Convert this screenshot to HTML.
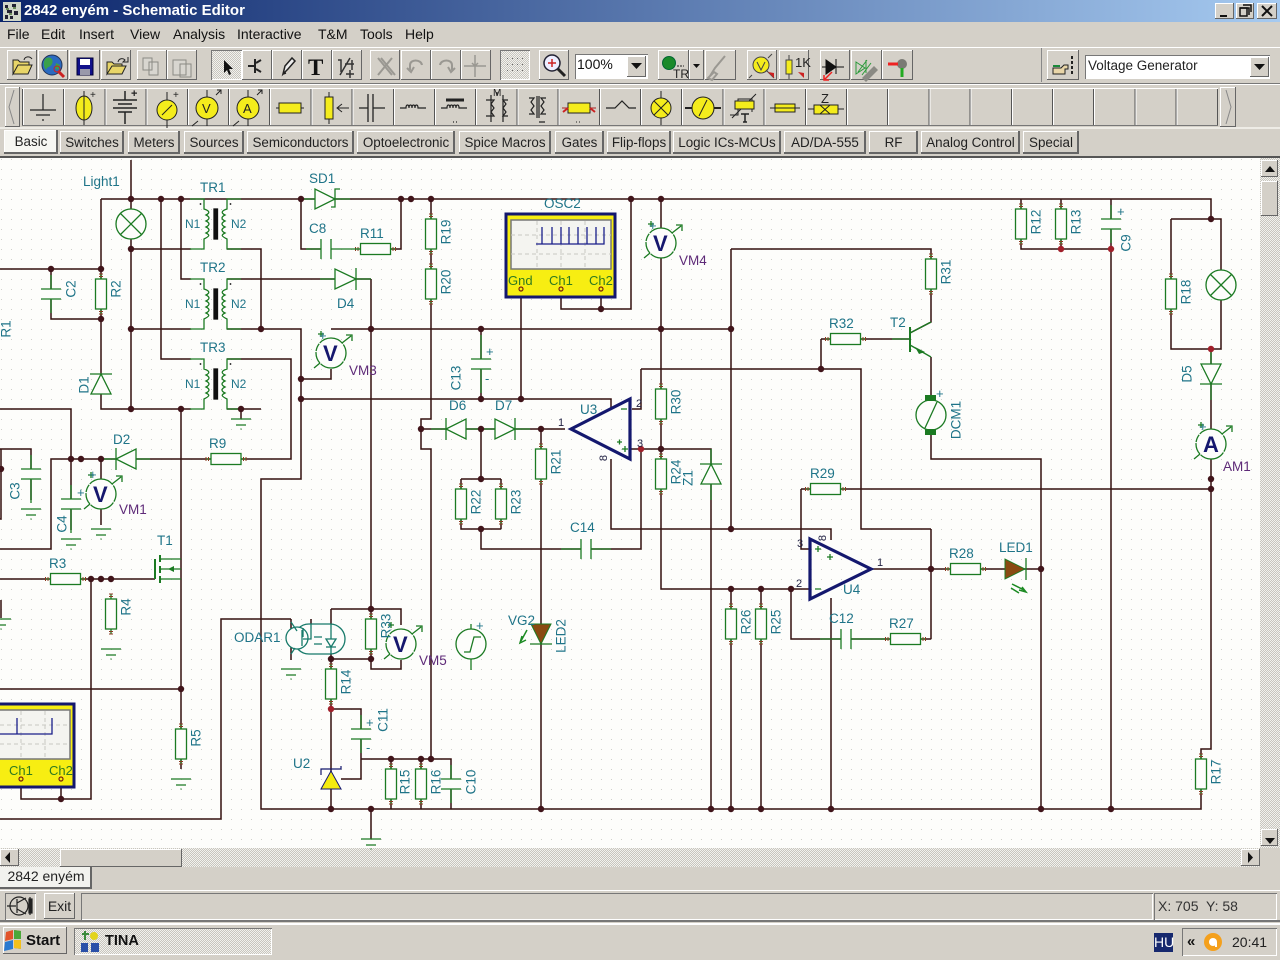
<!DOCTYPE html>
<html><head><meta charset="utf-8"><title>2842 enyém - Schematic Editor</title>
<style>
html,body{margin:0;padding:0;background:#d4d0c8;width:1280px;height:960px;overflow:hidden}
body{position:relative;font-family:"Liberation Sans",sans-serif;font-size:14px;color:#111}
.a{position:absolute;white-space:nowrap}
.b{position:absolute;background:#d4d0c8;box-shadow:inset -1px -1px #666,inset 1px 1px #fff;box-sizing:border-box}
.s{position:absolute;background:#d4d0c8;box-shadow:inset 1px 1px #777,inset -1px -1px #fff;box-sizing:border-box}
.t{position:absolute;top:131px;height:23px;line-height:24px;text-align:center;background:#d4d0c8;box-shadow:inset -2px -2px #666,inset 1px 1px #fff;font-size:13.4px;color:#222;white-space:nowrap}
.d{background:repeating-conic-gradient(#c8c5be 0 25%,#f2f2ee 0 50%) 0 0/2px 2px}
#title{left:0;top:0;width:1280px;height:22px;background:linear-gradient(90deg,#0a246a,#a6caf0)}
svg{position:absolute;left:0;top:0}
svg text{font-family:"Liberation Sans",sans-serif;font-size:13.5px;fill:#1f7488}
.p{fill:#5e2a78}
.k{fill:#224}
.v{text-anchor:middle;dominant-baseline:central}
.y{fill:#2f7a20;font-size:13px}
</style></head><body>
<div class="a" id="title"></div>
<div class="a" style="left:24px;top:2px;color:#fff;font-weight:bold;font-size:15px;line-height:18px">2842 enyém - Schematic Editor</div>
<div class="b" style="left:1215px;top:3px;width:19px;height:16px"></div>
<div class="b" style="left:1236px;top:3px;width:18px;height:16px"></div>
<div class="b" style="left:1257px;top:3px;width:20px;height:16px"></div>

<div class="a" style="left:7px;top:26px">File</div>
<div class="a" style="left:41px;top:26px">Edit</div>
<div class="a" style="left:79px;top:26px">Insert</div>
<div class="a" style="left:130px;top:26px">View</div>
<div class="a" style="left:173px;top:26px">Analysis</div>
<div class="a" style="left:237px;top:26px">Interactive</div>
<div class="a" style="left:318px;top:26px">T&amp;M</div>
<div class="a" style="left:360px;top:26px">Tools</div>
<div class="a" style="left:405px;top:26px">Help</div>

<div class="a" style="left:0;top:47px;width:1280px;height:1px;background:#fff"></div>
<div class="a" style="left:0;top:83px;width:1280px;height:1px;background:#777"></div>
<div class="a" style="left:0;top:84px;width:1280px;height:1px;background:#fff"></div>
<div class="a" style="left:0;top:127px;width:1280px;height:2px;background:#eeece6"></div>
<div class="a" style="left:0;top:156px;width:1280px;height:2px;background:#555"></div>

<!-- toolbar 1 -->
<div class="b" style="left:7px;top:50px;width:30px;height:30px"></div>
<div class="b" style="left:38px;top:50px;width:30px;height:30px"></div>
<div class="b" style="left:69px;top:50px;width:31px;height:30px"></div>
<div class="b" style="left:101px;top:50px;width:30px;height:30px"></div>
<div class="b" style="left:137px;top:50px;width:30px;height:30px"></div>
<div class="b" style="left:167px;top:50px;width:30px;height:30px"></div>
<div class="s d" style="left:211px;top:50px;width:31px;height:30px"></div>
<div class="b" style="left:242px;top:50px;width:30px;height:30px"></div>
<div class="b" style="left:272px;top:50px;width:30px;height:30px"></div>
<div class="b" style="left:302px;top:50px;width:30px;height:30px"></div>
<div class="b" style="left:332px;top:50px;width:30px;height:30px"></div>
<div class="b" style="left:370px;top:50px;width:30px;height:30px"></div>
<div class="b" style="left:401px;top:50px;width:30px;height:30px"></div>
<div class="b" style="left:431px;top:50px;width:30px;height:30px"></div>
<div class="b" style="left:461px;top:50px;width:30px;height:30px"></div>
<div class="s d" style="left:500px;top:50px;width:30px;height:30px"></div>
<div class="b" style="left:539px;top:50px;width:30px;height:30px"></div>
<div class="s" style="left:575px;top:54px;width:73px;height:25px;background:#fff"></div>
<div class="a" style="left:577px;top:56px;font-size:14px">100%</div>
<div class="b" style="left:627px;top:56px;width:19px;height:21px"></div>
<div class="b" style="left:658px;top:50px;width:31px;height:30px"></div>
<div class="b" style="left:689px;top:50px;width:15px;height:30px"></div>
<div class="b" style="left:705px;top:50px;width:31px;height:30px"></div>
<div class="b" style="left:747px;top:50px;width:30px;height:30px"></div>
<div class="b" style="left:779px;top:50px;width:30px;height:30px"></div>
<div class="b" style="left:820px;top:50px;width:30px;height:30px"></div>
<div class="b" style="left:851px;top:50px;width:31px;height:30px"></div>
<div class="b" style="left:882px;top:50px;width:31px;height:30px"></div>
<div class="a" style="left:1041px;top:48px;width:1px;height:34px;background:#888"></div>
<div class="b" style="left:1047px;top:50px;width:32px;height:30px"></div>
<div class="s" style="left:1085px;top:55px;width:185px;height:24px;background:#fff"></div>
<div class="a" style="left:1088px;top:58px;font-size:13.5px;color:#222">Voltage Generator</div>
<div class="b" style="left:1250px;top:57px;width:19px;height:20px"></div>

<!-- toolbar 2 -->
<div class="b" style="left:5px;top:87px;width:15px;height:40px"></div>
<div class="a" style="left:22px;top:88px;width:1196px;height:38px;background:repeating-linear-gradient(90deg,#555 0 1px,#fff 1px 2px,#d4d0c8 2px 41.2px);border-top:1px solid #fff;border-bottom:1px solid #777;box-sizing:border-box"></div>
<div class="b" style="left:1220px;top:87px;width:16px;height:40px"></div>

<!-- tabs -->
<div class="t" style="left:4px;width:54px;top:130px;background:#f6f6f2;height:24px">Basic</div>
<div class="t" style="left:60px;width:64px">Switches</div>
<div class="t" style="left:128px;width:52px">Meters</div>
<div class="t" style="left:184px;width:60px">Sources</div>
<div class="t" style="left:247px;width:107px">Semiconductors</div>
<div class="t" style="left:357px;width:98px">Optoelectronic</div>
<div class="t" style="left:459px;width:92px">Spice Macros</div>
<div class="t" style="left:555px;width:49px">Gates</div>
<div class="t" style="left:607px;width:64px">Flip-flops</div>
<div class="t" style="left:673px;width:108px">Logic ICs-MCUs</div>
<div class="t" style="left:784px;width:82px">AD/DA-555</div>
<div class="t" style="left:869px;width:49px">RF</div>
<div class="t" style="left:921px;width:99px">Analog Control</div>
<div class="t" style="left:1023px;width:56px">Special</div>

<!-- canvas -->
<div class="a" style="left:0;top:158px;width:1260px;height:690px;background:#fdfdfb"></div>

<!-- scrollbars -->
<div class="a d" style="left:1260px;top:158px;width:20px;height:690px"></div>
<div class="b" style="left:1261px;top:160px;width:17px;height:17px"></div>
<div class="b" style="left:1261px;top:181px;width:17px;height:35px"></div>
<div class="b" style="left:1261px;top:829px;width:17px;height:17px"></div>
<div class="a d" style="left:0;top:848px;width:1260px;height:19px"></div>
<div class="b" style="left:0;top:849px;width:19px;height:17px"></div>
<div class="b" style="left:60px;top:849px;width:122px;height:18px"></div>
<div class="b" style="left:1241px;top:849px;width:19px;height:17px"></div>

<!-- page tab -->
<div class="a" style="left:0;top:867px;width:92px;height:22px;background:#f2f2ee;box-shadow:inset -2px -2px #666;text-align:center;line-height:19px;font-size:14px;color:#222">2842 enyém</div>

<!-- status -->
<div class="a" style="left:0;top:890px;width:1280px;height:1px;background:#fff"></div>
<div class="s" style="left:5px;top:893px;width:31px;height:27px;background:#d4d0c8"></div>
<div class="b" style="left:44px;top:893px;width:31px;height:26px;text-align:center;line-height:26px;font-size:14px;color:#222">Exit</div>
<div class="s" style="left:81px;top:893px;width:1072px;height:27px"></div>
<div class="s" style="left:1154px;top:893px;width:123px;height:27px;line-height:26px;padding-left:4px;font-size:14px;color:#333">X: 705&nbsp; Y: 58</div>
<div class="a" style="left:0;top:920px;width:1280px;height:2px;background:#777"></div>
<div class="a" style="left:0;top:923px;width:1280px;height:2px;background:#fff"></div>

<!-- taskbar -->
<div class="b" style="left:3px;top:927px;width:64px;height:27px;line-height:27px;padding-left:23px;font-weight:bold;font-size:15px">Start</div>
<div class="s d" style="left:74px;top:928px;width:198px;height:27px;line-height:27px;padding-left:31px;font-weight:bold;font-size:14.5px;color:#111">TINA</div>
<div class="a" style="left:1154px;top:933px;width:19px;height:19px;background:#16286e;color:#fff;line-height:19px;text-align:center;font-size:14px">HU</div>
<div class="s" style="left:1182px;top:928px;width:95px;height:28px"></div>
<div class="a" style="left:1187px;top:933px;font-weight:bold;font-size:15px;line-height:18px">«</div>
<div class="a" style="left:1232px;top:933px;font-size:14px;line-height:18px;color:#222">20:41</div>

<svg width="1280" height="960" viewBox="0 0 1280 960" xmlns="http://www.w3.org/2000/svg">
<defs>
<pattern id="grid" width="10" height="10" patternUnits="userSpaceOnUse"><rect x="1" y="9" width="1" height="1" fill="#cfcfca"/></pattern>
<g id="tk"><path d="M-2 0h4M-2 2.5h4" stroke="#8a3a20" stroke-width="1" fill="none"/></g>
<g id="rv" fill="#fdfdfb" stroke="#1b7a22" stroke-width="1.3"><path d="M0-20V20" fill="none"/><rect x="-5.5" y="-15" width="11" height="30"/><path d="M-2-20h4M-2-17.5h4M-2 17.5h4M-2 20h4" stroke="#8a3a20" stroke-width="1"/></g>
<g id="rh" fill="#fdfdfb" stroke="#1b7a22" stroke-width="1.3"><path d="M-20 0H20" fill="none"/><rect x="-15" y="-5.5" width="30" height="11"/><path d="M-20-2v4M-17.5-2v4M17.5-2v4M20-2v4" stroke="#8a3a20" stroke-width="1"/></g>
<g id="gnd" fill="none" stroke="#1b7a22" stroke-width="1.3"><path d="M-10 0H10M-5 6H5M-.5 10h1"/></g>
<g id="j"><circle r="3.2" fill="#40141a"/></g>
<g id="jr"><circle r="3.2" fill="#a01f2a"/></g>
<g id="capv" stroke="#1b7a22" stroke-width="1.3" fill="none"><rect x="-10" y="0" width="20" height="10" fill="#fdfdfb" stroke="none"/><path d="M-10 0H10M-10 10H10"/></g>
<g id="caph" stroke="#1b7a22" stroke-width="1.3" fill="none"><rect x="0" y="-10" width="10" height="20" fill="#fdfdfb" stroke="none"/><path d="M0-10V10M10-10V10"/></g>
<g id="meter" fill="none" stroke="#1b7a22" stroke-width="1.3"><circle r="15" fill="#fdfdfb" stroke-dasharray="8 1 26 1 12 1"/><path d="M11-10L20-17M15-18h6v6M-11 10L-17 15M-13-19h6M-10-22v6"/></g>
<g id="trf" fill="none" stroke="#1b7a22" stroke-width="1.3"><path d="M-14 0H0V10C6 12 6 14 2 16C6 18 6 20 2 22C6 24 6 26 2 28C6 30 6 32 2 34C6 36 6 37 0 40V50H-14M37 0H23V10C17 12 17 14 21 16C17 18 17 20 21 22C17 24 17 26 21 28C17 30 17 32 21 34C17 36 17 37 23 40V50H37"/><rect x="10" y="10" width="3.5" height="30" fill="#111" stroke="#111"/><circle cx="-3.5" cy="5" r=".9" fill="#111" stroke="none"/><circle cx="26.5" cy="5" r=".9" fill="#111" stroke="none"/></g>
<g id="btnV" stroke="#222" stroke-width="1" fill="#f4ec1c"><path d="M0-18V18" fill="none"/><circle r="11"/><path d="M-9 13L-15 18M9-13L14-18M10-18h4v4" fill="none"/></g>
</defs>
<rect x="0" y="158" width="1260" height="690" fill="url(#grid)"/>

<!-- wires -->
<path fill="none" stroke="#35100f" stroke-width="1.5" d="M101 199H1211V219M131 160V409M101 199V409H191M0 269H101M51 269V319H101M131 249H191M161 199V359H191M181 199V279H191M131 329H191M227 249H261V329M227 279H371M227 329H301V479H261V809H1201V749H1211V349M227 359H291V459H51V549H0M0 409H71V530M227 409H261M241 409V419M181 409V769M371 279V669H401V660M331 329H731M661 199V589H810M791 589V639H931M731 249H931V289M731 249V529M301 379H331V369M301 399H611V409M521 289V399M561 289V309H631V199M601 289V309M481 329V399M431 199V419H421V449H431V759M421 429H565M541 429V809M481 429V479M461 479H501M461 479V529H501M501 479V529M481 529V549H641V449M641 369H861V529H931M641 369V409H632M631 449H711V809M611 459V529H831V540M831 598V809M801 489V549H810M801 489H1211M821 339V369M821 339H909M931 357V400M931 430V459H1041V809M910 333L931 322V289M731 589V809M761 589V809M871 569H1026M1026 569H1041M931 529V639M1021 199V249H1111V809M1061 199V249M1111 199V249M1171 219H1221V349H1171V219M0 579H155M91 579V799H21V785M61 799V785M0 689H181M0 819H221V619H291M291 619V660M311 619V624M331 609V809M331 609H401V625M331 659H371M331 709H361V779H341M361 759H451V809M391 759V809M421 759V809M371 809V839M0 449H31V500M1 449V519H0M101 459V525M1 600V618M301 199V249H321M401 199V249H391"/>

<!-- oscilloscope OSC2 -->
<rect x="506" y="214" width="109" height="83" fill="#f7ee12" stroke="#14186e" stroke-width="3"/>
<rect x="511" y="220" width="100" height="49" fill="#f4f4f0" stroke="#777" stroke-width="1.5"/>
<path d="M511 235h100M511 254h100M537 221v48M561 221v48M585 221v48" stroke="#c9c9c2" stroke-dasharray="4 3" fill="none"/>
<path d="M536 244H604V227M542 244V227M552 244V227M561 244V227M569 244V227M578 244V227M587 244V227M596 244V227" stroke="#1a1f8a" stroke-width="1.3" fill="none"/>
<text class="y" x="508" y="285">Gnd</text><text class="y" x="549" y="285">Ch1</text><text class="y" x="589" y="285">Ch2</text>
<g fill="#f7ee12" stroke="#7a2010" stroke-width="1.2"><circle cx="521" cy="289" r="2"/><circle cx="561" cy="289" r="2"/><circle cx="601" cy="289" r="2"/></g>

<!-- oscilloscope OSC1 partial -->
<rect x="-3" y="704" width="77" height="83" fill="#f7ee12" stroke="#14186e" stroke-width="3"/>
<rect x="-3" y="710" width="73" height="49" fill="#f4f4f0" stroke="#777" stroke-width="1.5"/>
<path d="M0 725h68M0 744h68M21 711v48M45 711v48" stroke="#c9c9c2" stroke-dasharray="4 3" fill="none"/>
<path d="M0 734H52V718M17 734V718" stroke="#1a1f8a" stroke-width="1.3" fill="none"/>
<text class="y" x="9" y="775">Ch1</text><text class="y" x="49" y="775">Ch2</text>
<g fill="#f7ee12" stroke="#7a2010" stroke-width="1.2"><circle cx="21" cy="779" r="2"/><circle cx="61" cy="779" r="2"/></g>

<!-- resistors -->
<use href="#rv" x="101" y="294"/><use href="#rv" x="111" y="614"/><use href="#rv" x="181" y="744"/><use href="#rv" x="331" y="684"/><use href="#rv" x="371" y="634"/><use href="#rv" x="391" y="784"/><use href="#rv" x="421" y="784"/><use href="#rv" x="431" y="234"/><use href="#rv" x="431" y="284"/><use href="#rv" x="541" y="464"/><use href="#rv" x="461" y="504"/><use href="#rv" x="501" y="504"/><use href="#rv" x="661" y="404"/><use href="#rv" x="661" y="474"/><use href="#rv" x="931" y="274"/><use href="#rv" x="731" y="624"/><use href="#rv" x="761" y="624"/><use href="#rv" x="1021" y="224"/><use href="#rv" x="1061" y="224"/><use href="#rv" x="1171" y="294"/><use href="#rv" x="1201" y="774"/>
<use href="#rh" x="375.500" y="249"/><use href="#rh" x="226" y="459"/><use href="#rh" x="65.500" y="579"/><use href="#rh" x="845.500" y="339"/><use href="#rh" x="825.500" y="489"/><use href="#rh" x="965.500" y="569"/><use href="#rh" x="905.500" y="639"/>

<!-- capacitors -->
<use href="#capv" x="51" y="289"/><use href="#capv" x="481" y="359"/><use href="#capv" x="361" y="729"/><use href="#capv" x="451" y="779"/><use href="#capv" x="1111" y="219"/><use href="#capv" x="31" y="469"/><use href="#capv" x="71" y="499"/>
<use href="#caph" x="321" y="249"/><use href="#caph" x="581" y="549"/><use href="#caph" x="841" y="639"/>
<path d="M306 249H321M331 249H360M561 549H581M591 549H611M841 639H820M851 639H885" stroke="#1b7a22" stroke-width="1.3" fill="none"/>
<path d="M481 335V359M481 369V393M51 275V289M51 299V313M1111 205V219M1111 229V243M361 715V729M361 739V753M451 765V779M451 789V803M31 455V469M31 479V503M71 485V499M71 509V533" stroke="#1b7a22" stroke-width="1.3" fill="none"/>

<!-- grounds -->
<use href="#gnd" x="241" y="419"/><use href="#gnd" x="31" y="509"/><use href="#gnd" x="71" y="539"/><use href="#gnd" x="101" y="529"/><use href="#gnd" x="111" y="649"/><use href="#gnd" x="181" y="779"/><use href="#gnd" x="291" y="669"/><use href="#gnd" x="371" y="839"/><use href="#gnd" x="1" y="619"/>

<!-- transformers -->
<use href="#trf" x="204" y="199"/><use href="#trf" x="204" y="279"/><use href="#trf" x="204" y="359"/>

<!-- diodes -->
<g fill="#fdfdfb" stroke="#1b7a22" stroke-width="1.3">
<path d="M315 189V209L335 199ZM331 207h4V189h5M302 199H315M335 199H350"/>
<path d="M335 269V289L356 279ZM356 268V290M320 279H335M356 279H371"/>
<path d="M101 374L91 394H111ZM90 374H112"/>
<path d="M136 449V469L116 459ZM116 448V470M136 459H150M101 459H116"/>
<path d="M466 419V439L446 429ZM446 418V440M431 429H446M466 429H495"/>
<path d="M495 419V439L515 429ZM515 418V440M515 429H530"/>
<path d="M711 464L701 484H721ZM700 464H722M711 449V464M711 484V500"/>
<path d="M1201 364L1211 384L1221 364ZM1200 384H1222M1211 349V364M1211 384V400"/>
</g>

<!-- lamps -->
<g fill="#fdfdfb" stroke="#1b7a22" stroke-width="1.3">
<circle cx="131" cy="224" r="15"/><path d="M120.500 213.500L141.500 234.500M141.500 213.500L120.500 234.500"/>
<circle cx="1221" cy="285" r="15"/><path d="M1210.500 274.500L1231.500 295.500M1231.500 274.500L1210.500 295.500"/>
<circle cx="471" cy="644" r="15"/><path d="M464 652H470L474 637H481M471 624V629M471 659V670"/>
</g>

<!-- meters -->
<use href="#meter" x="101" y="494"/><use href="#meter" x="331" y="353"/><use href="#meter" x="661" y="243"/><use href="#meter" x="401" y="644"/><use href="#meter" x="1211" y="444"/>
<g><text x="93" y="502" style="font-size:22px;font-weight:bold;fill:#16186e">V</text><text x="323" y="361" style="font-size:22px;font-weight:bold;fill:#16186e">V</text><text x="653" y="251" style="font-size:22px;font-weight:bold;fill:#16186e">V</text><text x="393" y="652" style="font-size:22px;font-weight:bold;fill:#16186e">V</text><text x="1203" y="452" style="font-size:22px;font-weight:bold;fill:#16186e">A</text></g>

<!-- opamps -->
<polygon points="571,429 630,399 630,459" fill="none" stroke="#14186e" stroke-width="3.200"/>
<polygon points="810,539 871,569 810,599" fill="none" stroke="#14186e" stroke-width="3.200"/>
<path d="M621 409h6M617 442h5M619.500 439.500v5M622 449h6M625 446v6M815 549h6M818 546v6M827 557h6M830 554v6M815 589h6" stroke="#1b7a22" stroke-width="1.300" fill="none"/>

<!-- transistors -->
<g stroke="#1b7a22" stroke-width="2" fill="none"><path d="M910 327V352"/><path d="M892 339H910M910 333L931 322M910 345L931 357" stroke-width="1.300"/><path d="M155 559V579M160 555v7M160 566v7M160 576v7" /><path d="M160 559H181M160 569H181M160 579H181" stroke-width="1.300"/></g>
<path d="M915 347L925 352L919 354ZM168 569l6-3v6Z" fill="#1b7a22"/>

<!-- motor -->
<circle cx="931" cy="415" r="15" fill="#fdfdfb" stroke="#1b7a22" stroke-width="1.300"/>
<path d="M925 428L937 402" stroke="#1b7a22" stroke-width="1.300"/><rect x="925" y="395" width="11" height="6" fill="#1b7a22"/><rect x="925" y="429" width="11" height="6" fill="#1b7a22"/>

<!-- LEDs -->
<path d="M531 624H551L541 644Z" fill="#8a4a12" stroke="#1b7a22"/><path d="M530 644H552" stroke="#1b7a22" stroke-width="1.300"/>
<path d="M1005 559V579L1025 569Z" fill="#8a4a12" stroke="#1b7a22"/><path d="M1026 558V580" stroke="#1b7a22" stroke-width="1.300"/>
<path d="M527 630L521 641M522 636l-2 7 6-3M1012 584L1024 590M1019 590l7 2-4-5M1011 588l8 5" stroke="#1b8a22" stroke-width="1.500" fill="none"/>

<!-- U2 -->
<polygon points="331,771 321,789 341,789" fill="#f4ec10" stroke="#14186e"/><path d="M321 775V769H341V766" stroke="#14186e" fill="none" stroke-width="1.200"/>

<!-- ODAR1 -->
<g fill="none" stroke="#177a6a" stroke-width="1.300"><rect x="294" y="624" width="51" height="30" rx="15" fill="#fdfdfb"/><circle cx="297" cy="638" r="11" fill="#fdfdfb"/><path d="M302 630V646M303 637V628M291 622L297 631M295 648L291 654M311 624V639H303M331 624V639M326 639h10l-5 8zM326 647h10M331 647V654M314 637h8M314 644h8"/></g>

<!-- junctions -->
<g>
<use href="#j" x="131" y="199"/><use href="#j" x="161" y="199"/><use href="#j" x="181" y="199"/><use href="#j" x="301" y="199"/><use href="#j" x="401" y="199"/><use href="#j" x="411" y="199"/><use href="#j" x="431" y="199"/><use href="#j" x="631" y="199"/><use href="#j" x="661" y="199"/><use href="#j" x="51" y="269"/><use href="#j" x="101" y="269"/><use href="#j" x="101" y="319"/><use href="#j" x="131" y="249"/><use href="#j" x="131" y="329"/><use href="#j" x="131" y="409"/><use href="#j" x="181" y="409"/><use href="#j" x="261" y="329"/><use href="#j" x="241" y="409"/><use href="#j" x="371" y="329"/><use href="#j" x="301" y="379"/><use href="#j" x="301" y="399"/><use href="#j" x="71" y="459"/><use href="#j" x="81" y="459"/><use href="#j" x="101" y="459"/><use href="#j" x="481" y="329"/><use href="#j" x="661" y="329"/><use href="#j" x="731" y="329"/><use href="#j" x="481" y="399"/><use href="#j" x="521" y="399"/><use href="#j" x="601" y="309"/><use href="#j" x="421" y="429"/><use href="#j" x="481" y="429"/><use href="#j" x="541" y="429"/><use href="#j" x="481" y="479"/><use href="#j" x="481" y="529"/><use href="#jr" x="641" y="449"/><use href="#j" x="661" y="449"/><use href="#j" x="821" y="369"/><use href="#j" x="731" y="529"/><use href="#j" x="731" y="589"/><use href="#j" x="761" y="589"/><use href="#j" x="791" y="589"/><use href="#j" x="931" y="569"/><use href="#j" x="1041" y="569"/><use href="#j" x="1211" y="219"/><use href="#jr" x="1061" y="249"/><use href="#jr" x="1111" y="249"/><use href="#jr" x="1211" y="349"/><use href="#j" x="1211" y="479"/><use href="#j" x="1211" y="489"/><use href="#j" x="91" y="579"/><use href="#j" x="101" y="579"/><use href="#j" x="111" y="579"/><use href="#j" x="181" y="689"/><use href="#j" x="61" y="799"/><use href="#j" x="371" y="609"/><use href="#j" x="331" y="659"/><use href="#j" x="371" y="659"/><use href="#jr" x="331" y="709"/><use href="#j" x="391" y="759"/><use href="#j" x="421" y="759"/><use href="#j" x="431" y="759"/><use href="#j" x="331" y="809"/><use href="#j" x="371" y="809"/><use href="#j" x="541" y="809"/><use href="#j" x="711" y="809"/><use href="#j" x="731" y="809"/><use href="#j" x="761" y="809"/><use href="#j" x="831" y="809"/><use href="#j" x="1041" y="809"/><use href="#j" x="1111" y="809"/><use href="#j" x="1" y="469"/>
</g>

<!-- labels -->
<text x="83" y="186">Light1</text><text x="200" y="192">TR1</text><text x="200" y="272">TR2</text><text x="200" y="352">TR3</text>
<text x="185" y="228" style="font-size:12px">N1</text><text x="231" y="228" style="font-size:12px">N2</text><text x="185" y="308" style="font-size:12px">N1</text><text x="231" y="308" style="font-size:12px">N2</text><text x="185" y="388" style="font-size:12px">N1</text><text x="231" y="388" style="font-size:12px">N2</text>
<text x="309" y="183">SD1</text><text x="309" y="233">C8</text><text x="360" y="238">R11</text><text x="337" y="308">D4</text><text x="113" y="444">D2</text><text x="209" y="448">R9</text><text x="157" y="545">T1</text><text x="49" y="568">R3</text><text x="234" y="642">ODAR1</text><text x="293" y="768">U2</text><text x="508" y="625">VG2</text><text x="570" y="532">C14</text><text x="449" y="410">D6</text><text x="495" y="410">D7</text><text x="580" y="414">U3</text><text x="544" y="208">OSC2</text><text x="810" y="478">R29</text><text x="949" y="558">R28</text><text x="999" y="552">LED1</text><text x="889" y="628">R27</text><text x="829" y="623">C12</text><text x="843" y="594">U4</text><text x="829" y="328">R32</text><text x="890" y="327">T2</text>
<text class="p" x="119" y="514">VM1</text><text class="p" x="349" y="375">VM3</text><text class="p" x="679" y="265">VM4</text><text class="p" x="419" y="665">VM5</text><text class="p" x="1223" y="471">AM1</text>
<g>
<text class="v" transform="translate(71,289) rotate(-90)">C2</text><text class="v" transform="translate(116,289) rotate(-90)">R2</text><text class="v" transform="translate(6,329) rotate(-90)">R1</text><text class="v" transform="translate(84,385) rotate(-90)">D1</text><text class="v" transform="translate(15,491) rotate(-90)">C3</text><text class="v" transform="translate(62,524) rotate(-90)">C4</text><text class="v" transform="translate(126,607) rotate(-90)">R4</text><text class="v" transform="translate(196,738) rotate(-90)">R5</text><text class="v" transform="translate(386,626) rotate(-90)">R33</text><text class="v" transform="translate(346,682) rotate(-90)">R14</text><text class="v" transform="translate(383,720) rotate(-90)">C11</text><text class="v" transform="translate(405,782) rotate(-90)">R15</text><text class="v" transform="translate(436,782) rotate(-90)">R16</text><text class="v" transform="translate(471,782) rotate(-90)">C10</text><text class="v" transform="translate(561,636) rotate(-90)">LED2</text><text class="v" transform="translate(476,502) rotate(-90)">R22</text><text class="v" transform="translate(516,502) rotate(-90)">R23</text><text class="v" transform="translate(556,462) rotate(-90)">R21</text><text class="v" transform="translate(456,378) rotate(-90)">C13</text><text class="v" transform="translate(446,232) rotate(-90)">R19</text><text class="v" transform="translate(446,282) rotate(-90)">R20</text><text class="v" transform="translate(676,402) rotate(-90)">R30</text><text class="v" transform="translate(676,472) rotate(-90)">R24</text><text class="v" transform="translate(688,478) rotate(-90)">Z1</text><text class="v" transform="translate(776,622) rotate(-90)">R25</text><text class="v" transform="translate(746,622) rotate(-90)">R26</text><text class="v" transform="translate(946,272) rotate(-90)">R31</text><text class="v" transform="translate(956,420) rotate(-90)">DCM1</text><text class="v" transform="translate(1036,222) rotate(-90)">R12</text><text class="v" transform="translate(1076,222) rotate(-90)">R13</text><text class="v" transform="translate(1126,243) rotate(-90)">C9</text><text class="v" transform="translate(1186,292) rotate(-90)">R18</text><text class="v" transform="translate(1187,374) rotate(-90)">D5</text><text class="v" transform="translate(1216,772) rotate(-90)">R17</text>
</g>
<g><text class="k" x="558" y="426" style="font-size:11px">1</text><text class="k" x="636" y="407" style="font-size:11px">2</text><text class="k" x="637" y="447" style="font-size:11px">3</text><text class="k" x="877" y="566" style="font-size:11px">1</text><text class="k" x="796" y="587" style="font-size:11px">2</text><text class="k" x="797" y="547" style="font-size:11px">3</text><text class="k v" transform="translate(604,458) rotate(-90)" style="font-size:11px">8</text><text class="k v" transform="translate(823,538) rotate(-90)" style="font-size:11px">8</text></g>
<g><text x="89" y="479" style="font-size:13px">+</text><text x="319" y="340" style="font-size:13px">+</text><text x="649" y="230" style="font-size:13px">+</text><text x="1199" y="431" style="font-size:13px">+</text><text x="486" y="356" style="font-size:13px">+</text><text x="485" y="383" style="font-size:13px">-</text><text x="366" y="727" style="font-size:13px">+</text><text x="366" y="752" style="font-size:13px">-</text><text x="1117" y="216" style="font-size:13px">+</text><text x="77" y="497" style="font-size:13px">+</text><text x="476" y="630" style="font-size:13px">+</text><text x="936" y="398" style="font-size:13px">+</text></g>

<!-- window controls -->
<path d="M1220 15h7v2h-7z" fill="#111"/>
<path d="M1240 8h9v7M1243 5h8v7" fill="none" stroke="#111" stroke-width="1.500"/><rect x="1240" y="8" width="7" height="8" fill="none" stroke="#111" stroke-width="1.500"/>
<path d="M1262 6L1272 16M1272 6L1262 16" stroke="#111" stroke-width="2"/>
<!-- title icon -->
<rect x="3" y="2" width="18" height="19" fill="#cfd5c8"/><path d="M5 5h3v3h-3zM12 4h4v3h-4zM7 10h5v3H7zM14 11h4v4h-4zM5 15h3v4H5zM10 16h3v3h-3z" fill="#223"/><path d="M6 9h3M13 8h3M9 14h3" stroke="#6a8a5a" stroke-width="2"/>

<!-- toolbar1 icons -->
<g stroke-width="1">
<path d="M13 74V60h5l2 2h9v3H18l-5 9zM13 74l5-9h14l-4 9z" fill="#e8d568" stroke="#222"/>
<path d="M24 60c1-4 6-4 8-1" stroke="#222" fill="none"/>
<circle cx="52" cy="65" r="10" fill="#2a6ac0" stroke="#235"/><path d="M46 58c5-2 8 2 6 6s-5 2-6 6c-3-4-3-9 0-12zM56 63l4 2-2 5-3-2z" fill="#3aa04a"/><path d="M58 71l6 6" stroke="#c22" stroke-width="3"/><circle cx="57" cy="69" r="3" fill="none" stroke="#c22"/>
<rect x="77" y="58" width="16" height="17" fill="#10108a" stroke="#003"/><rect x="80" y="59" width="10" height="6" fill="#fff"/><rect x="80" y="69" width="10" height="6" fill="#99a"/>
<path d="M107 74V62h5l2 2h8v2h-10l-5 8zM107 74l5-8h14l-4 8z" fill="#e8d568" stroke="#222"/><path d="M118 62c1-4 5-4 7-2l-2 2h5v-5" stroke="#222" fill="none"/>
<path d="M143 58h9v12h-9zM149 62h9v13h-9z" fill="#d8d6d0" stroke="#8a8a84"/>
<path d="M173 60h13v15h-13zM180 64h11v13h-11z" fill="#d8d6d0" stroke="#8a8a84"/>
<path d="M224 60v13l3-3 2 5 2-1-2-5h4z" fill="#111"/>
<path d="M255 59v14M255 66h-7M256 63l5-3M256 69l5 3" stroke="#222" stroke-width="2" fill="none"/>
<path d="M283 74l2-8 7-8 3 3-7 8zM283 74l3-1" fill="#eee" stroke="#222" stroke-width="1.500"/>
<text x="308" y="75" style="font-family:'Liberation Serif',serif;font-size:23px;font-weight:bold;fill:#111">T</text>
<path d="M338 60h3v12M350 58l-10 17M345 64h9M352 60v10M346 74h8M350 70v8" stroke="#333" stroke-width="1.500" fill="none"/>
<path d="M378 58l14 17M392 58L378 75M381 58l14 17" stroke="#9a9892" stroke-width="2" fill="none"/>
<path d="M410 70v-5c0-6 11-6 12 0M407 68l4 4 3-5" stroke="#9a9892" stroke-width="2" fill="none"/>
<path d="M452 70v-5c0-6-11-6-12 0M455 68l-4 4-3-5" stroke="#9a9892" stroke-width="2" fill="none"/>
<path d="M464 66h22M475 55v22M472 63l3 3 3-3" stroke="#9a9892" stroke-width="1.500" fill="none"/>
<g fill="#666"><rect x="507" y="58" width="1" height="1"/><rect x="512" y="58" width="1" height="1"/><rect x="517" y="58" width="1" height="1"/><rect x="522" y="58" width="1" height="1"/><rect x="507" y="64" width="1" height="1"/><rect x="512" y="64" width="1" height="1"/><rect x="517" y="64" width="1" height="1"/><rect x="522" y="64" width="1" height="1"/><rect x="507" y="70" width="1" height="1"/><rect x="512" y="70" width="1" height="1"/><rect x="517" y="70" width="1" height="1"/><rect x="522" y="70" width="1" height="1"/></g>
<circle cx="552" cy="63" r="8" fill="#eef" stroke="#223" stroke-width="1.500"/><path d="M558 69l7 7" stroke="#222" stroke-width="3"/><path d="M548 63h8M552 59v8" stroke="#c22" stroke-width="1.500"/>
<path d="M631 63h11l-5.500 6z" fill="#111"/>
<circle cx="669" cy="63" r="6.500" fill="#1a8a2a" stroke="#063"/>
<text x="673" y="78" style="font-size:12px;fill:#222">TR</text><path d="M677 66h7" stroke="#222" stroke-dasharray="2 1"/>
<path d="M693 64h7l-3.500 4z" fill="#111"/>
<path d="M710 76l5-8 10-12M708 78l6-6 3 2-5 6z" stroke="#9a9892" stroke-width="2" fill="none"/>
<circle cx="761" cy="65" r="8" fill="#f4ec1c" stroke="#444"/><path d="M757 62l4 8 4-8" stroke="#444" fill="none"/><path d="M752 75l-3 3M768 58l4-4M766 70l8 8" stroke="#444" fill="none"/><path d="M768 72l6 6v-5z" fill="#c22"/>
<rect x="786" y="60" width="6" height="14" fill="#f4ec1c" stroke="#444"/><path d="M789 55v5M789 74v5" stroke="#444"/><text x="795" y="67" style="font-size:13px;fill:#222">1K</text><path d="M798 72l6 6v-5z" fill="#c22"/>
<path d="M826 60v14l10-7zM836 59v15M822 67h22" fill="#111" stroke="#111"/><path d="M824 80l8-8M824 75v5h5" stroke="#e22" stroke-width="1.500" fill="none"/>
<path d="M856 62v12l9-6zM866 60v13M858 72l9-12M862 75l9-12" stroke="#2a9a3a" fill="none"/><path d="M862 78l12-12 4 4-12 12z" fill="#8a8a84"/>
<circle cx="902" cy="64" r="5" fill="#7a7a74"/><path d="M888 64h10" stroke="#e22" stroke-width="3"/><path d="M902 68v9" stroke="#2a2" stroke-width="3"/>
<path d="M1053 68h8l3-3h4v4h-3v5h-12z" fill="#e8d5a8" stroke="#222"/><path d="M1053 66h7" stroke="#1a8a3a" stroke-width="2"/><path d="M1072 56v20" stroke="#222" stroke-dasharray="3 2" stroke-width="2"/>
<path d="M1254 64h11l-5.500 6z" fill="#111"/>
</g>

<!-- toolbar2 icons -->
<path d="M14 90L9 107 14 124" stroke="#888" fill="none"/><path d="M1226 90L1231 107 1226 124" stroke="#888" fill="none"/>
<g>
<g stroke="#222" stroke-width="1.200" fill="none"><path d="M43 94V110M30 110H56M36 115H50M42 120h2"/></g>
<g transform="translate(84,108)" stroke="#222" fill="#f4ec1c"><path d="M0-17V17" fill="none"/><ellipse rx="8" ry="12"/><path d="M0-12V12" fill="none"/></g>
<text x="90" y="98" style="font-size:10px;fill:#222">+</text>
<g stroke="#222" stroke-width="1.500" fill="none"><path d="M125 91V100M113 100H137M118 104H132M113 108H137M118 112H132M125 112V124"/></g><text x="131" y="97" style="font-size:11px;fill:#222;font-weight:bold">+</text>
<g transform="translate(167,110)" stroke="#222" fill="#f4ec1c"><path d="M0-18V18" fill="none"/><circle r="10"/><path d="M-5 5L5-5" fill="none"/></g><text x="173" y="98" style="font-size:10px;fill:#222">+</text>
<use href="#btnV" x="207" y="108"/><text x="202" y="113" style="font-size:13px;fill:#222">V</text>
<use href="#btnV" x="248" y="108"/><text x="243" y="113" style="font-size:13px;fill:#222">A</text>
<g stroke="#222"><path d="M276 108H304"/><rect x="279" y="103" width="22" height="10" fill="#f4ec1c"/></g>
<g stroke="#222"><path d="M329 92V124M338 108H349"/><rect x="325" y="97" width="8" height="22" fill="#f4ec1c"/><path d="M342 104l-5 4 5 4" fill="none"/></g>
<g stroke="#222" fill="none" stroke-width="1.300"><path d="M359 108H368V94M373 94V122M373 108H385M368 108V122"/></g>
<g stroke="#222" fill="none" stroke-width="1.200"><path d="M400 108h6c0-4 3-4 3 0c0-4 3-4 3 0c0-4 3-4 3 0c0-4 3-4 3 0h8"/></g>
<g stroke="#222" fill="none" stroke-width="1.200"><path d="M441 108h6c0-4 3-4 3 0c0-4 3-4 3 0c0-4 3-4 3 0c0-4 3-4 3 0h8" /><path d="M446 100H464" stroke-width="3"/><path d="M453 122h6" stroke-dasharray="1 2"/></g>
<g stroke="#222" fill="none" stroke-width="1.200"><path d="M491 95v27M503 95v27M486 100h8l-3 4 3 4-3 4 3 4h-8M508 100h-5l3 4-3 4 3 4-3 4h5M497 92V96"/></g><text x="493" y="96" style="font-size:10px;fill:#222">M</text>
<g stroke="#222" fill="none" stroke-width="1.200"><path d="M529 98h5l-3 4 3 4-3 4 3 4h-5M546 98h-5l3 4-3 4 3 4-3 4h5M537 96v22M539 96v22M539 122h6" /></g>
<g stroke="#222"><path d="M562 108H596" stroke="#a22"/><rect x="568" y="103" width="22" height="10" fill="#f4ec1c"/><path d="M563 112l5-4M595 112l-5-4" stroke="#c22" stroke-width="2"/><path d="M576 122h6" stroke-dasharray="1 2"/></g>
<g stroke="#222" stroke-width="1.200" fill="none"><path d="M606 108H615L622 101 629 108H636"/></g>
<g transform="translate(661,108)" stroke="#222" fill="#f4ec1c"><path d="M0-17V17" fill="none"/><circle r="10"/><path d="M-7-7L7 7M7-7L-7 7" fill="none"/></g>
<g transform="translate(703,108)" stroke="#222"><path d="M-18 0H18" stroke-width="2"/><ellipse rx="11" ry="11" fill="#f4ec1c"/><path d="M-4 8L4-8" fill="none"/></g>
<g stroke="#222" fill="none"><path d="M730 115H738V99H752V112M732 118L756 94" /><rect x="735" y="101" width="19" height="8" fill="#f4ec1c"/><path d="M745 114v8M741 114h8M743 122h4" stroke-width="1.500"/></g>
<g stroke="#222"><path d="M770 108H800"/><rect x="775" y="104" width="20" height="8" fill="#f4ec1c"/><path d="M775 108H795"/></g>
<g stroke="#222"><path d="M808 109H844"/><rect x="814" y="105" width="24" height="9" fill="#f4ec1c"/><path d="M820 105l10 9M830 105l-10 9"/></g><text x="821" y="103" style="font-size:13px;fill:#222">Z</text>
</g>

<!-- scroll arrows -->
<path d="M1265 172h10l-5-6zM1265 838h10l-5 6zM10 852v11l-5-5.500zM1248 852v11l5-5.500z" fill="#111"/>

<!-- status icon -->
<g stroke="#222" fill="none" stroke-width="1.200"><circle cx="19" cy="906" r="9"/><path d="M7 906H16M17 899V913M17 903l9-5M17 909l9 5M30 897v18" /><rect x="29" y="899" width="3" height="14" fill="#222"/></g>
<!-- start logo -->
<path d="M6 932l7-2v9l-8 2zM14 930l7 1v8l-7 0z" fill="#e2542a"/><path d="M5 942l8-2v9l-9 2zM14 940h7v9l-7-1z" fill="#2a7ad0"/><path d="M14 930l7 1v8l-7 0z" fill="#4ca83a"/><path d="M14 940h7v9l-7-1z" fill="#f2c01c"/>
<!-- TINA icon -->
<rect x="81" y="943" width="7" height="9" fill="#2a50a8"/><rect x="91" y="943" width="8" height="9" fill="#2a50a8"/><circle cx="94" cy="936" r="4" fill="#e2d41c"/><path d="M82 934h7M85 931v9" stroke="#3a8a3a" stroke-width="2"/>
<!-- tray -->
<circle cx="1213" cy="942" r="9" fill="#f4a01c"/><circle cx="1213" cy="942" r="4" fill="#fff"/><path d="M1216 942v5" stroke="#fff" stroke-width="2"/>
</svg>
</body></html>
